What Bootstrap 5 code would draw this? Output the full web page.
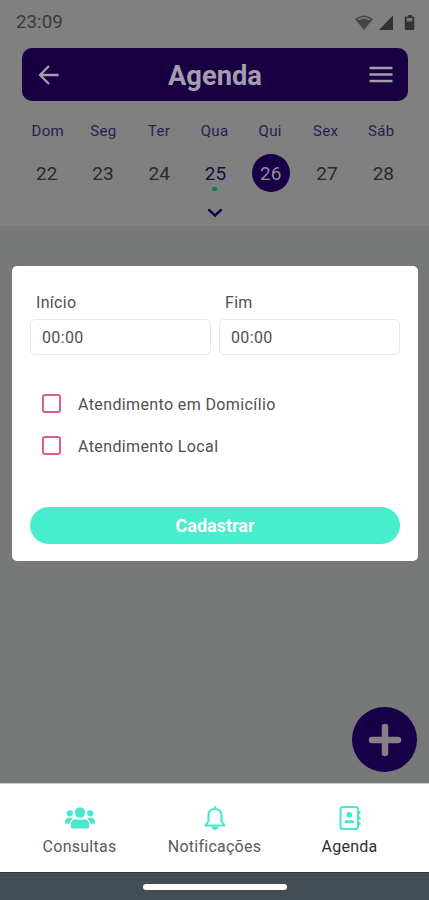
<!DOCTYPE html>
<html lang="pt-BR">
<head>
<meta charset="utf-8">
<meta name="viewport" content="width=device-width, initial-scale=1">
<title>Agenda</title>
<link href="https://cdn.jsdelivr.net/npm/bootstrap@5.3.0/dist/css/bootstrap.min.css" rel="stylesheet">
<style>
body{font-family:Roboto,"Liberation Sans",sans-serif;background:#777978;color:#505050;line-height:1;overflow:hidden}
svg{display:block;flex:none}
.phone{width:429px;height:900px}
.top-area{background:#808080;height:226px}
.status{height:48px;padding:0 14px 3px 16px;color:#3a3a3a;font-size:18.8px}
.app-header{height:53px;margin:0 21px 0 22px;padding:0 15px 0 16px;border-radius:10px;background:#180042;color:#a39fae}
.app-header h1{font-size:27.3px;font-weight:700;padding:3px 0 0 2px}
.week-names{height:30px;margin-top:15px;padding:0 20px;font-size:15px;letter-spacing:.3px;color:#2a1c52}
.week-days{height:38px;margin-top:8px;padding:0 18px;font-size:19px;color:#272b2c}
.week-days>span{padding-left:1px}
.week-names>*,.week-days>*{flex:1 1 0;text-align:center}
.has-event{color:#1c0948}
.has-event::after{content:"";position:absolute;left:50%;bottom:-8px;width:5px;height:4px;margin-left:-2.5px;border-radius:2px;background:#08795a}
.day-active{width:38px;height:38px;border-radius:50%;background:#180048;color:#918d9b}
.expand{margin-top:16px}
.booking{margin:40px 11px 0 12px;height:295px;padding:29px 18px 17.5px;border-radius:5px;border:0;color:#505050}
.booking .field-name{font-size:16px;letter-spacing:.3px;line-height:16px;padding-left:6px;margin-bottom:8px}
.booking .time{height:36px;border:1.5px solid #e8e8e8;border-radius:5px;padding:0 11px;font-size:16px;letter-spacing:.35px;color:#505050;line-height:1}
.options{margin-top:38px;padding-left:12px;font-size:16px;letter-spacing:.38px}
.option{height:20px;margin-bottom:22px}
.option span{padding-top:3px}
.option .form-check-input{width:19px;height:19px;margin:0 17px 0 0;border:2px solid #df5d82;border-radius:3px}
.booking .submit{height:37px;background:#48edce;color:#fff;font-size:18px;font-weight:700;border:0;line-height:1}
.submit span{position:relative;top:1px}
.fab{right:12px;bottom:11px;width:65px;height:65px;border:0;border-radius:50%;background:#180048}
.tabs{height:89px;background:#fff;border-top:1px solid #c7c8c8;padding:19px 12px 0}
.tab{flex:1 1 0;font-size:16px;letter-spacing:.25px;color:#5a5a5a;text-decoration:none;gap:8px}
.tab svg{color:#48e8cc}
.tab.current{color:#303030}
.system{height:28px;background:#454d54;border-top:1px solid #2d343a}
.system span{width:144px;height:6px;border-radius:3px;background:#fff}
</style>
<script src="https://cdn.jsdelivr.net/npm/bootstrap@5.3.0/dist/js/bootstrap.bundle.min.js"></script>
</head>
<body>
<div class="phone d-flex flex-column">
  <div class="top-area">
    <div class="status d-flex align-items-center justify-content-between">
      <span>23:09</span>
      <svg width="60" height="18" viewBox="0 0 60 18" fill="#333">
        <path d="M0 5Q9-2 18 5L9 16Z" fill="#444"/><path d="M2.500 5Q9 .8 15.500 5L14.500 6.500Q9 2.800 3.500 6.500Z" fill="#777"/>
        <path d="M24 16L38 1.500V16Z"/><path d="M51 2.500h2V1h4v1.500h1.500q.8 0 .8.800V15q0 1-1 1h-7.500q-1 0-1-1V3.300q0-.8.800-.8Z"/><path d="M51.600 4h5.800v3.500h-5.800Z" fill="#777"/>
      </svg>
    </div>
    <header class="app-header d-flex align-items-center justify-content-between">
      <svg width="21" height="20" viewBox="0 0 21 20" fill="none" stroke="currentColor" stroke-width="2.300"><path d="M20.500 10H2.500M11 1L2 10l9 9"/></svg>
      <h1 class="mb-0">Agenda</h1>
      <svg width="24" height="17" viewBox="0 0 24 17" fill="none" stroke="currentColor" stroke-width="2.600"><path d="M.5 2H23.500M.5 8.500H23.500M.5 15H23.500"/></svg>
    </header>
    <div class="week-names d-flex align-items-center">
      <span>Dom</span><span>Seg</span><span>Ter</span><span>Qua</span><span>Qui</span><span>Sex</span><span>Sáb</span>
    </div>
    <div class="week-days d-flex align-items-center">
      <span>22</span><span>23</span><span>24</span><span class="has-event position-relative">25</span>
      <span class="d-flex justify-content-center p-0"><span class="day-active d-flex align-items-center justify-content-center">26</span></span>
      <span>27</span><span>28</span>
    </div>
    <svg class="expand mx-auto" width="16" height="10" viewBox="0 0 16 10" fill="none" stroke="#180048" stroke-width="2.500" stroke-linecap="round"><path d="M2 2L8 7.500L14 2"/></svg>
  </div>
  <main class="flex-grow-1 position-relative overflow-hidden">
    <form class="booking card">
      <div class="d-flex gap-2">
        <div class="w-50"><label for="inicio" class="field-name d-block">Início</label><input id="inicio" class="time form-control" value="00:00"></div>
        <div class="w-50"><label for="fim" class="field-name d-block">Fim</label><input id="fim" class="time form-control" value="00:00"></div>
      </div>
      <div class="options">
        <label class="option d-flex align-items-center"><input type="checkbox" class="form-check-input"><span>Atendimento em Domicílio</span></label>
        <label class="option d-flex align-items-center"><input type="checkbox" class="form-check-input"><span>Atendimento Local</span></label>
      </div>
      <button type="button" class="submit btn rounded-pill w-100 mt-auto p-0"><span>Cadastrar</span></button>
    </form>
    <button type="button" class="fab position-absolute d-flex align-items-center justify-content-center p-0" aria-label="Adicionar">
      <svg width="34" height="34" viewBox="0 0 34 34" fill="none" stroke="#858087" stroke-width="6.500" stroke-linecap="round"><path d="M17 4V30M4 17H30"/></svg>
    </button>
  </main>
  <nav class="tabs d-flex">
    <a class="tab d-flex flex-column align-items-center" href="#">
      <svg width="30" height="28" viewBox="0 0 30 28" fill="currentColor"><circle cx="15" cy="9.500" r="5.200"/><circle cx="4.800" cy="10.300" r="3.100"/><circle cx="25.200" cy="10.300" r="3.100"/><path d="M6 25v-3.500q0-5.300 5.200-5.300 3.800 1.400 7.600 0 5.200 0 5.200 5.300V25q0 .5-.8.500H7q-1 0-1-.5ZM0 20q0-5.300 4-5.300h2.500l1.300.8Q5 17.200 4.600 20.800H.8Q0 20.800 0 20ZM30 20q0-5.300-4-5.300h-2.500l-1.300.8q2.800 1.700 3.200 5.300h3.800q.8 0 .8-.8Z"/></svg>
      <span>Consultas</span>
    </a>
    <a class="tab d-flex flex-column align-items-center" href="#">
      <svg width="24" height="28" viewBox="0 0 24 28" fill="none" stroke="currentColor" stroke-width="2.200" stroke-linejoin="round"><path d="M12 4V6M5.500 18V12.500q0-6.500 6.500-6.500t6.500 6.500V18l3 4.500h-19L5.500 18Z" stroke-linecap="round"/><path d="M8.500 23.500h7q-.5 3.500-3.500 3.500t-3.500-3.500Z" fill="currentColor" stroke="none"/></svg>
      <span>Notificações</span>
    </a>
    <a class="tab current d-flex flex-column align-items-center" href="#">
      <svg width="22" height="28" viewBox="0 0 22 28" fill="none" stroke="currentColor" stroke-width="2"><rect x="1.500" y="4" width="17.500" height="22" rx="2"/><path d="M20.500 8v3M20.500 13.500v3M20.500 19v3"/><g fill="currentColor" stroke="none"><circle cx="10.300" cy="11.800" r="2.900"/><path d="M5.500 20.200v-1q0-2.200 2.500-2.200 2.300.8 4.600 0 2.500 0 2.500 2.200v1Z"/></g></svg>
      <span>Agenda</span>
    </a>
  </nav>
  <div class="system d-flex align-items-center justify-content-center"><span></span></div>
</div>
</body>
</html>
